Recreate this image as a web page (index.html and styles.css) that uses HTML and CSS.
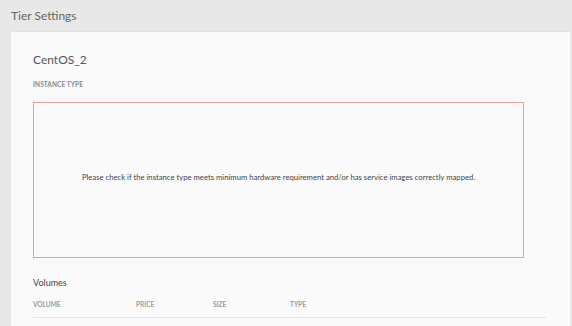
FILE: index.html
```html
<!DOCTYPE html>
<html>
<head>
<meta charset="utf-8">
<link rel="stylesheet" href="styles.css">
</head>
<body>
<div class="page">
  <h1 class="page-title">Tier Settings</h1>
  <div class="card">
    <h2 class="tier-name">CentOS_2</h2>
    <div class="label">INSTANCE TYPE</div>
    <div class="warning-box">
      <p class="warning-text">Please check if the instance type meets minimum hardware requirement and/or has service images correctly mapped.</p>
    </div>
    <h3 class="section-title">Volumes</h3>
    <div class="table-head">
      <span class="col col-volume">VOLUME</span>
      <span class="col col-price">PRICE</span>
      <span class="col col-size">SIZE</span>
      <span class="col col-type">TYPE</span>
    </div>
  </div>
</div>
</body>
</html>
```

FILE: styles.css
```css
html, body {
  margin: 0;
  padding: 0;
  background: #e8e8e8;
  font-family: Lato, "Open Sans", sans-serif;
  overflow: hidden;
}
.page {
  padding-left: 11px;
  height: 326px;
}
.page-title {
  margin: 0;
  height: 31px;
  padding-top: 9px;
  box-sizing: border-box;
  font-size: 12px;
  font-weight: 400;
  color: #666;
  line-height: 14px;
}
.card {
  width: 559px;
  height: 300px;
  background: #fafafa;
  border-top: 1px solid #e2e2e2;
  box-sizing: border-box;
  padding: 21px 24px 0 22px;
}
.tier-name {
  margin: 0;
  font-size: 12px;
  font-weight: 400;
  color: #555;
  line-height: 14px;
}
.label {
  margin-top: 14px;
  font-size: 6.5px;
  font-weight: 700;
  color: #8a8a8a;
  line-height: 8px;
  letter-spacing: 0.1px;
}
.warning-box {
  margin-top: 13px;
  width: 491px;
  height: 156px;
  box-sizing: border-box;
  border: 1px solid #e4a19b;
  display: flex;
  align-items: center;
  justify-content: center;
}
.warning-text {
  margin: 0;
  font-size: 7.7px;
  color: #444;
  line-height: 10px;
  padding-bottom: 6px;
}
.section-title {
  margin: 19px 0 0;
  font-size: 9px;
  font-weight: 400;
  color: #444;
  line-height: 11px;
}
.table-head {
  margin-top: 13px;
  display: flex;
  border-bottom: 1px solid #e3e3e3;
  padding-bottom: 8px;
  line-height: 8px;
}
.col {
  font-size: 6.5px;
  font-weight: 700;
  color: #9a9a9a;
}
.col-volume { width: 103px; }
.col-price { width: 77px; }
.col-size { width: 77px; }
.col-type { flex: 1; }
```
